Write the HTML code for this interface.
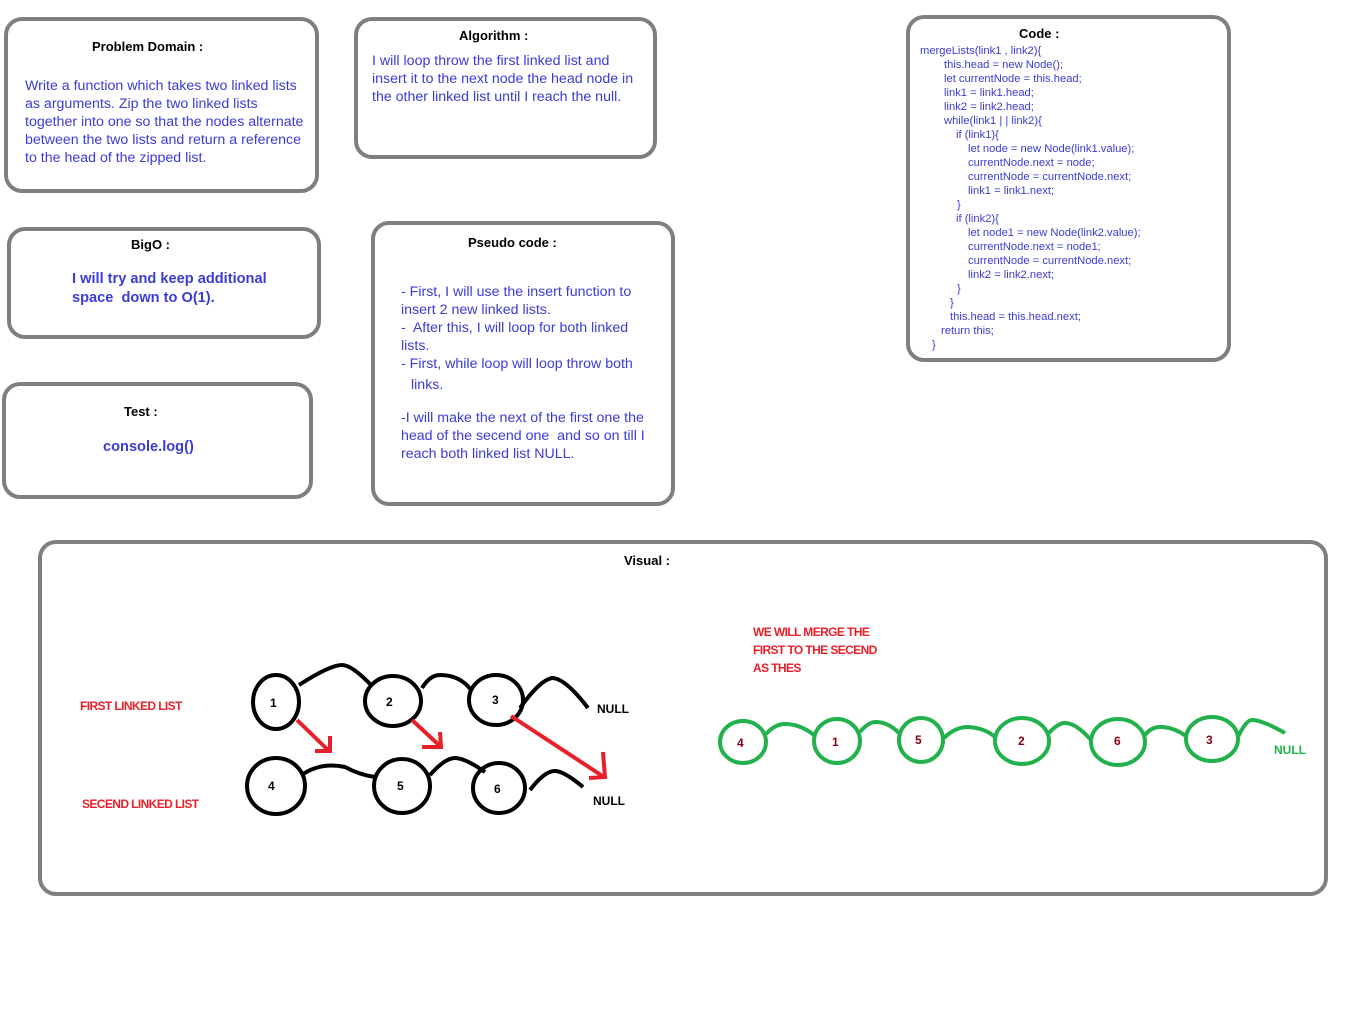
<!DOCTYPE html>
<html><head><meta charset="utf-8"><style>
body{margin:0;width:1360px;height:1024px;background:#fff;position:relative;overflow:hidden;font-family:"Liberation Sans",sans-serif}
.b{position:absolute;border:4px solid #7f7f7f;border-radius:18px;box-sizing:border-box}
.t{position:absolute;font-size:13px;font-weight:bold;color:#000;white-space:nowrap}
.x{position:absolute;font-size:14.2px;color:#3b3bd6;line-height:18px;white-space:nowrap}
.c{position:absolute;font-size:11.2px;color:#3b3bd6;line-height:14px;white-space:nowrap;left:920px;top:44px}
.c div{height:14px}
.r{position:absolute;font-size:12px;color:#e8202a;line-height:18px;white-space:nowrap;font-weight:bold;letter-spacing:-0.6px}
</style></head><body>
<div class="b" style="left:4px;top:17px;width:315px;height:176px"></div>
<div class="t" style="left:92px;top:39px">Problem Domain :</div>
<div class="x" style="left:25px;top:77px">Write a function which takes two linked lists<br>as arguments. Zip the two linked lists<br>together into one so that the nodes alternate<br>between the two lists and return a reference<br>to the head of the zipped list.</div>

<div class="b" style="left:354px;top:17px;width:303px;height:142px"></div>
<div class="t" style="left:459px;top:28px">Algorithm :</div>
<div class="x" style="left:372px;top:52px">I will loop throw the first linked list and<br>insert it to the next node the head node in<br>the other linked list until I reach the null.</div>

<div class="b" style="left:906px;top:15px;width:325px;height:347px"></div>
<div class="t" style="left:1019px;top:26px">Code :</div>
<div class="c">
<div>mergeLists(link1 , link2){</div>
<div style="margin-left:24px">this.head = new Node();</div>
<div style="margin-left:24px">let currentNode = this.head;</div>
<div style="margin-left:24px">link1 = link1.head;</div>
<div style="margin-left:24px">link2 = link2.head;</div>
<div style="margin-left:24px">while(link1 | | link2){</div>
<div style="margin-left:36px">if (link1){</div>
<div style="margin-left:48px">let node = new Node(link1.value);</div>
<div style="margin-left:48px">currentNode.next = node;</div>
<div style="margin-left:48px">currentNode = currentNode.next;</div>
<div style="margin-left:48px">link1 = link1.next;</div>
<div style="margin-left:37px">}</div>
<div style="margin-left:36px">if (link2){</div>
<div style="margin-left:48px">let node1 = new Node(link2.value);</div>
<div style="margin-left:48px">currentNode.next = node1;</div>
<div style="margin-left:48px">currentNode = currentNode.next;</div>
<div style="margin-left:48px">link2 = link2.next;</div>
<div style="margin-left:37px">}</div>
<div style="margin-left:30px">}</div>
<div style="margin-left:30px">this.head = this.head.next;</div>
<div style="margin-left:21px">return this;</div>
<div style="margin-left:12px">}</div>
</div>

<div class="b" style="left:7px;top:227px;width:314px;height:112px"></div>
<div class="t" style="left:131px;top:237px">BigO :</div>
<div class="x" style="left:72px;top:270px;font-weight:bold;font-size:14.6px;line-height:19px">I will try and keep additional<br>space&nbsp; down to O(1).</div>

<div class="b" style="left:371px;top:221px;width:304px;height:285px"></div>
<div class="t" style="left:468px;top:235px">Pseudo code :</div>
<div class="x" style="left:401px;top:283px">- First, I will use the insert function to<br>insert 2 new linked lists.<br>-&nbsp; After this, I will loop for both linked<br>lists.<br>- First, while loop will loop throw both</div>
<div class="x" style="left:411px;top:376px">links.</div>
<div class="x" style="left:401px;top:409px">-I will make the next of the first one the<br>head of the secend one&nbsp; and so on till I<br>reach both linked list NULL.</div>

<div class="b" style="left:2px;top:382px;width:311px;height:117px"></div>
<div class="t" style="left:124px;top:404px">Test :</div>
<div class="x" style="left:103px;top:438px;font-weight:bold;font-size:14.6px">console.log()</div>

<div class="b" style="left:38px;top:540px;width:1290px;height:356px"></div>
<div class="t" style="left:624px;top:553px">Visual :</div>
<div class="r" style="left:80px;top:697px">FIRST LINKED LIST</div>
<div class="r" style="left:82px;top:795px">SECEND LINKED LIST</div>
<div class="r" style="left:753px;top:623px">WE WILL MERGE THE<br>FIRST TO THE SECEND<br>AS THES</div>

<svg style="position:absolute;left:0;top:0" width="1360" height="1024">
<g fill="none" stroke="#000" stroke-width="4">
<ellipse cx="276" cy="702" rx="23" ry="27"/>
<ellipse cx="393" cy="701" rx="28" ry="25"/>
<ellipse cx="496" cy="700" rx="27" ry="25"/>
<ellipse cx="276" cy="786" rx="29" ry="28"/>
<ellipse cx="402" cy="786" rx="28" ry="27"/>
<ellipse cx="499" cy="788" rx="26" ry="25"/>
<path d="M299 685 Q330 665 342 665 Q352 665 372 686"/>
<path d="M422 688 Q430 675 440 675 Q460 675 471 690"/>
<path d="M520 708 Q540 680 552 678 Q565 678 588 708"/>
<path d="M303 774 Q322 762 345 767 Q360 775 375 777"/>
<path d="M430 775 Q445 758 455 758 Q465 758 485 772"/>
<path d="M530 790 Q545 770 556 771 Q565 772 583 787"/>
</g>
<g fill="none" stroke="#e8202a" stroke-width="4">
<path d="M297 720 L328 750 M315 751 L330 751 L330 736"/>
<path d="M412 720 L440 746 M422 747 L441 747 L440 732"/>
<path d="M511 716 L604 777 M589 778 L605 777 L603 752"/>
</g>
<g font-family="Liberation Sans" font-weight="bold" font-size="12" fill="#000">
<text x="270" y="707">1</text><text x="386" y="706">2</text><text x="492" y="704">3</text>
<text x="268" y="790">4</text><text x="397" y="790">5</text><text x="494" y="793">6</text>
<text x="597" y="713">NULL</text><text x="593" y="805">NULL</text>
</g>
<g fill="none" stroke="#22b14c" stroke-width="4">
<ellipse cx="743" cy="742" rx="23" ry="21"/>
<ellipse cx="837" cy="741" rx="23" ry="22"/>
<ellipse cx="921" cy="740" rx="22" ry="22"/>
<ellipse cx="1022" cy="741" rx="27" ry="23"/>
<ellipse cx="1118" cy="742" rx="27" ry="23"/>
<ellipse cx="1212" cy="739" rx="26" ry="22"/>
<path d="M766 734 Q775 724 785 724 Q800 724 814 735"/>
<path d="M860 732 Q868 722 876 722 Q888 722 899 733"/>
<path d="M944 738 Q955 727 968 727 Q985 728 995 737"/>
<path d="M1049 733 Q1058 723 1065 723 Q1076 723 1091 740"/>
<path d="M1145 735 Q1152 726 1163 727 Q1175 728 1186 736"/>
<path d="M1238 737 Q1246 720 1252 720 Q1262 720 1285 733"/>
</g>
<g font-family="Liberation Sans" font-weight="bold" font-size="12" fill="#880015">
<text x="737" y="747">4</text><text x="832" y="746">1</text><text x="915" y="744">5</text>
<text x="1018" y="745">2</text><text x="1114" y="745">6</text><text x="1206" y="744">3</text>
</g>
<text x="1274" y="754" font-family="Liberation Sans" font-weight="bold" font-size="12" fill="#22b14c">NULL</text>
</svg>
</body></html>
